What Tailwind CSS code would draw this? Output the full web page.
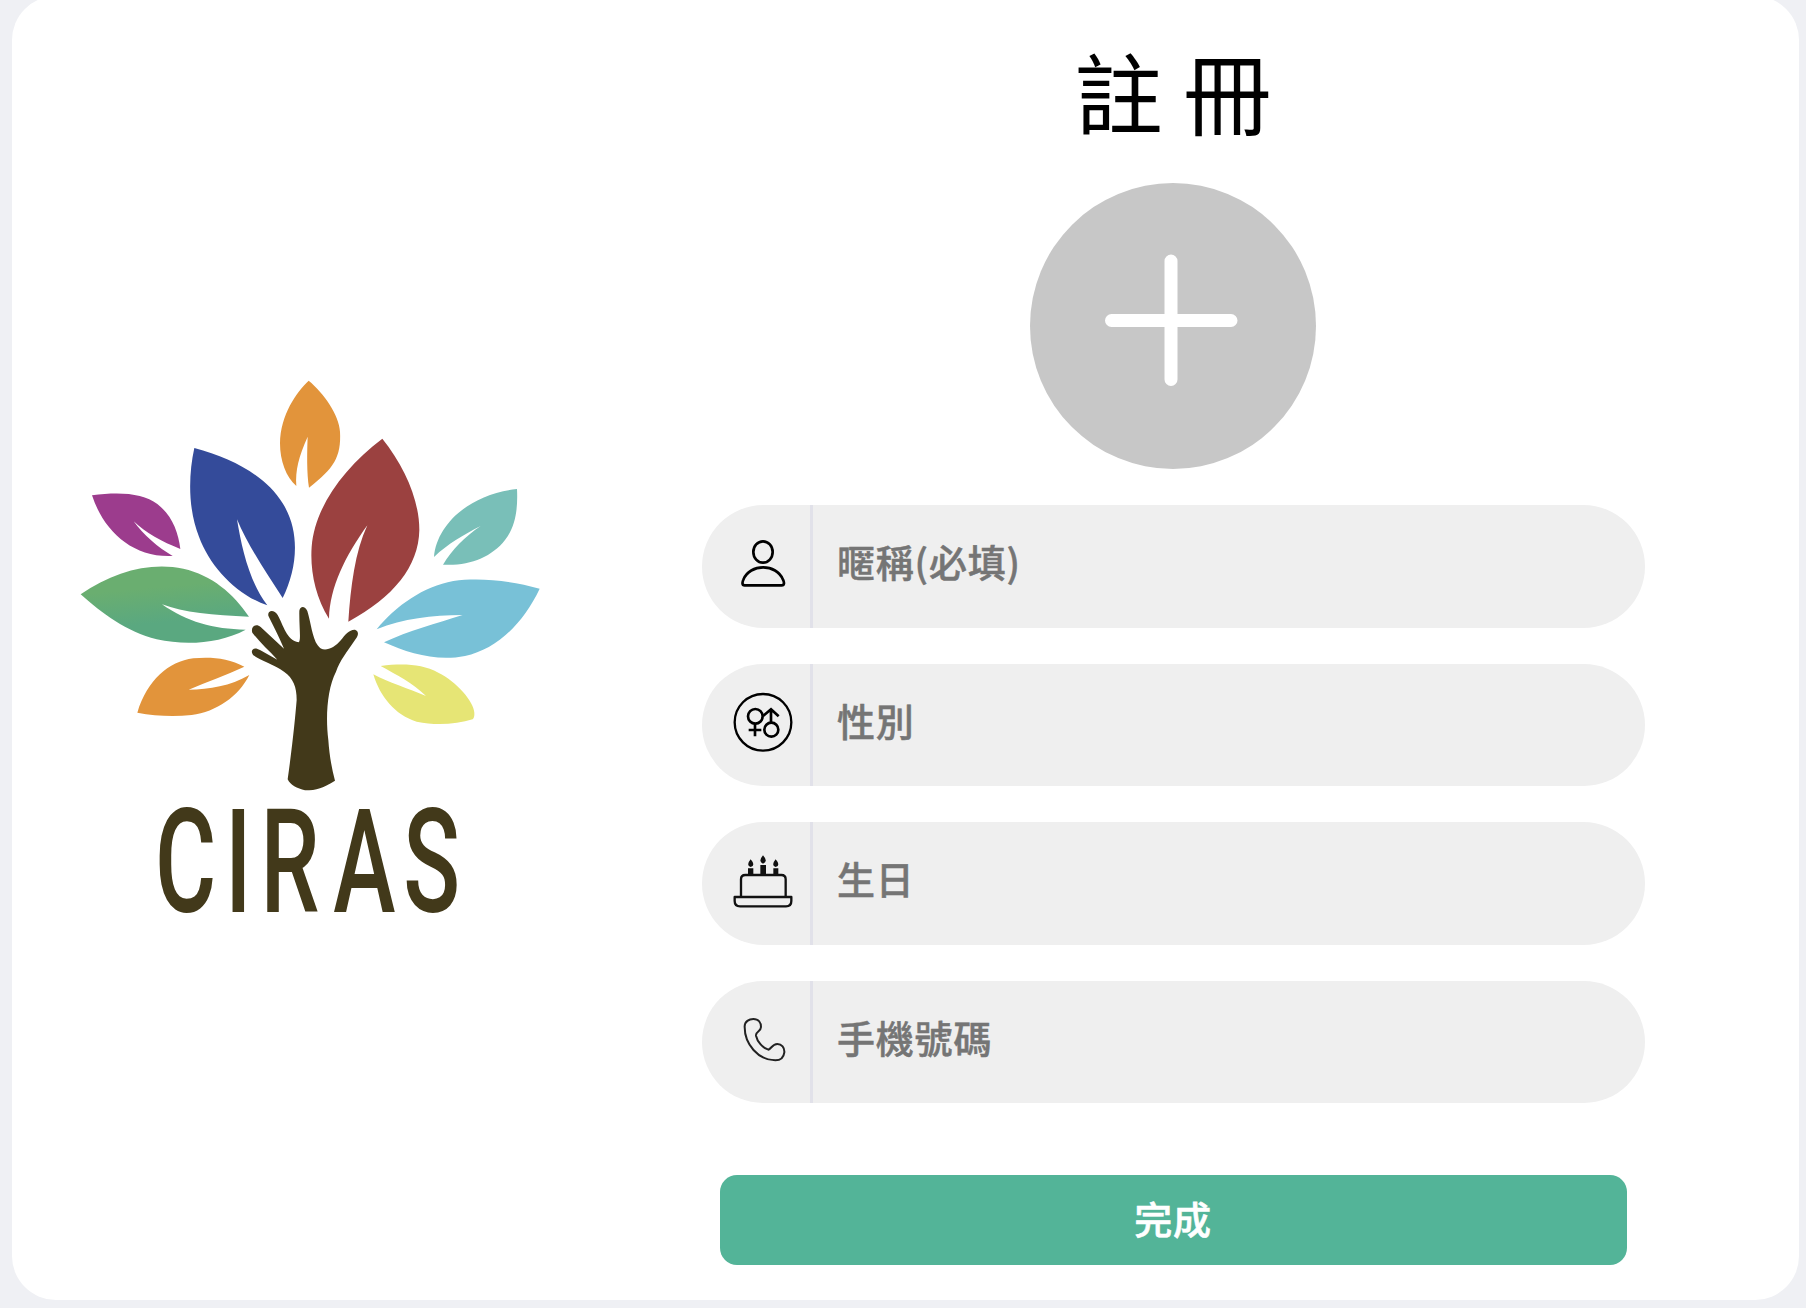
<!DOCTYPE html>
<html lang="zh-Hant">
<head>
<meta charset="utf-8">
<title>註冊</title>
<script src="https://cdn.jsdelivr.net/npm/@tailwindcss/browser@4"></script>
</head>
<body class="h-[1308px] w-[1806px] overflow-hidden bg-[#eff0f4] font-['Noto_Sans_CJK_TC',sans-serif]">
<main class="-mt-1 ml-[11.5px] flex h-[1304px] w-[1787px] rounded-[44px] bg-white">
  <section class="w-[690px] shrink-0 pt-[374px] pl-[58px]">
    <svg class="h-[600px] w-[480px] overflow-visible" viewBox="30 30 1440 1800">
      <defs>
        <linearGradient id="green" x1="0" y1="0" x2="0.2" y2="1">
          <stop offset="0.35" stop-color="#6aae70"/><stop offset="0.8" stop-color="#5aa880"/>
        </linearGradient>
      </defs>
      <path fill="#e2943b" d="M746 62C790 98 838 165 840 215C844 290 822 325 747 383C740 340 741 275 743 230C716 290 706 330 709 378C678 352 660 302 660 250C661 165 710 95 746 62Z"/>
      <path fill="#344b9a" d="M403 264C520 295 620 350 668 430C722 515 712 625 668 714C620 640 560 550 531 478C545 565 568 665 622 736C530 705 450 620 417 530C385 450 384 350 403 264Z"/>
      <path fill="#9b4140" d="M967 236C1034 320 1078 420 1078 510C1076 620 1000 712 865 785C872 680 885 575 922 496C855 590 810 680 807 776C765 710 750 630 755 560C765 440 850 325 967 236Z"/>
      <path fill="#9c3c8d" d="M96 406C180 394 250 400 292 432C335 465 355 515 361 567C305 545 258 520 221 484C250 525 295 563 338 588C215 594 130 510 96 406Z"/>
      <path fill="#79bfb8" d="M1371 387C1374 450 1366 500 1335 540C1295 592 1225 619 1149 614C1175 570 1215 530 1262 498C1210 525 1165 550 1122 591C1130 490 1235 400 1371 387Z"/>
      <path fill="url(#green)" d="M62 703C160 635 270 605 370 626C455 645 520 700 567 770C460 766 370 758 306 733C380 785 460 808 557 809C480 850 380 858 290 838C200 815 125 760 62 703Z"/>
      <path fill="#78c1d7" d="M1439 686C1390 790 1310 868 1215 888C1130 905 1045 880 972 847C1045 812 1130 790 1208 765C1115 766 1030 775 950 808C1010 735 1090 680 1180 663C1260 652 1350 662 1439 686Z"/>
      <path fill="#e2943b" d="M232 1058C262 960 325 905 400 895C455 890 505 895 553 920C500 945 440 965 386 989C450 988 510 978 568 945C535 1010 470 1055 395 1065C340 1070 285 1068 232 1058Z"/>
      <path fill="#e6e575" d="M1243 1058C1242 1025 1190 965 1135 938C1085 912 1030 910 962 918C1010 945 1060 970 1098 1008C1045 985 985 968 940 943C960 1010 1005 1065 1070 1085C1130 1098 1190 1092 1238 1078Q1244 1072 1243 1058Z"/>
      <path fill="#42391a" d="M683 1258C698 1150 705 1080 710 1020C710 980 700 955 672 935C640 913 600 900 580 886C568 870 582 858 600 870L652 899C625 870 597 845 577 818C571 800 588 788 602 801L672 866C655 825 637 792 625 767C622 750 643 748 653 765C670 795 680 842 716 847C724 842 717 800 718 752C721 737 735 738 742 753C752 785 757 834 773 856C787 879 820 868 843 840C855 824 868 808 885 809C898 813 895 828 887 837C862 875 840 900 828 935C802 985 796 1070 805 1140C808 1185 815 1225 825 1262C790 1284 770 1291 735 1291C712 1285 690 1275 683 1258Z"/>
      <text class="font-['Roboto',sans-serif] font-medium" font-size="433" fill="#42391a" transform="translate(0 1655) scale(0.65 1)" x="439 762 925 1261 1584">CIRAS</text>
    </svg>
  </section>

  <form class="flex w-[943px] shrink-0 flex-col items-center">
    <h1 class="mt-[30px] h-[134px] pt-[3px] text-[88.5px] leading-[120px] text-black">註 冊</h1>
    <button type="button" aria-label="新增照片" class="mt-[23px] size-[286px] shrink-0 rounded-full bg-[#c7c7c7]">
      <svg class="size-full" viewBox="0 0 286 286" fill="none" stroke="#fff" stroke-width="13" stroke-linecap="round"><path d="M141 78V196.500M81.500 137.500H201"/></svg>
    </button>

    <div class="mt-9 flex w-full flex-col gap-[36px]">
      <label class="flex h-[122.5px] overflow-hidden rounded-full bg-[#efefef]">
        <span class="w-[108px] shrink-0 pl-7">
          <svg class="h-[122.5px] w-[66px]" viewBox="120 45 198 367.5" fill="none" stroke="#000" stroke-width="8" stroke-linejoin="round"><ellipse cx="219" cy="186" rx="29" ry="32"/><path d="M164 286C155 286 157 276 160 269C179 220 260 220 279 269C283 277 284 286 275 286Z"/></svg>
        </span>
        <span class="w-[3px] shrink-0 bg-[#e1e1e9]"></span>
        <span class="pt-[28px] pl-[24.5px] text-[38px] leading-[56px] font-medium tracking-[0.8px] text-[#757575] [-webkit-text-stroke:0.5px_#757575]">暱稱(必填)</span>
      </label>
      <label class="flex h-[122.5px] overflow-hidden rounded-full bg-[#efefef]">
        <span class="w-[108px] shrink-0 pl-7">
          <svg class="h-[122.5px] w-[66px]" viewBox="120 40 198 367.5" fill="none" stroke="#000" stroke-width="7"><circle cx="219" cy="215" r="85"/><g stroke-width="8"><circle cx="196" cy="197" r="22"/><path d="M195 220V257M176 238H214"/><circle cx="244" cy="237" r="21"/><path d="M243 216V178M220 195L243 176L266 197"/></g></svg>
        </span>
        <span class="w-[3px] shrink-0 bg-[#e1e1e9]"></span>
        <span class="pt-[28px] pl-[24.5px] text-[38px] leading-[56px] font-medium tracking-[0.8px] text-[#757575] [-webkit-text-stroke:0.5px_#757575]">性別</span>
      </label>
      <label class="flex h-[122.5px] overflow-hidden rounded-full bg-[#efefef]">
        <span class="w-[108px] shrink-0 pl-7">
          <svg class="h-[122.5px] w-[66px]" viewBox="120 35 198 367.5" fill="none" stroke="#111" stroke-width="7" stroke-linejoin="round"><path d="M153 260V207Q153 194 166 194H274Q287 194 287 207V260M134 260H304V272Q304 288 288 288H150Q134 288 134 272Z"/><path fill="#111" stroke="none" d="M174 174H190V194H174ZM211 164H228V194H211ZM250 174H265V194H250ZM182 147Q198 165 182 170Q167 165 182 147ZM219 135Q236 154 219 160Q203 154 219 135ZM257 147Q273 165 257 170Q242 165 257 147Z"/></svg>
        </span>
        <span class="w-[3px] shrink-0 bg-[#e1e1e9]"></span>
        <span class="pt-[28px] pl-[24.5px] text-[38px] leading-[56px] font-medium tracking-[0.8px] text-[#757575] [-webkit-text-stroke:0.5px_#757575]">生日</span>
      </label>
      <label class="flex h-[122.5px] overflow-hidden rounded-full bg-[#efefef]">
        <span class="w-[108px] shrink-0 pl-7">
          <svg class="h-[122.5px] w-[66px]" viewBox="120 32 198 367.5" fill="none" stroke="#222" stroke-width="6" stroke-linejoin="round"><path d="M164 168C164 154 177 146 190 146C206 146 213 158 213 170C213 184 196 183 198 196C202 214 217 232 235 238C243 236 247 221 262 221C275 221 284 232 283 246C281 262 270 270 256 270C205 269 163 222 164 168Z"/></svg>
        </span>
        <span class="w-[3px] shrink-0 bg-[#e1e1e9]"></span>
        <span class="pt-[28px] pl-[24.5px] text-[38px] leading-[56px] font-medium tracking-[0.8px] text-[#757575] [-webkit-text-stroke:0.5px_#757575]">手機號碼</span>
      </label>
    </div>

    <button type="button" class="mt-[72px] flex h-[89.5px] w-[907px] shrink-0 justify-center rounded-[17px] bg-[#53b498] pt-[15px] text-[38px] leading-[56px] font-medium tracking-[0.8px] text-white [-webkit-text-stroke:0.6px_#fff]">完成</button>
  </form>
</main>
</body>
</html>
